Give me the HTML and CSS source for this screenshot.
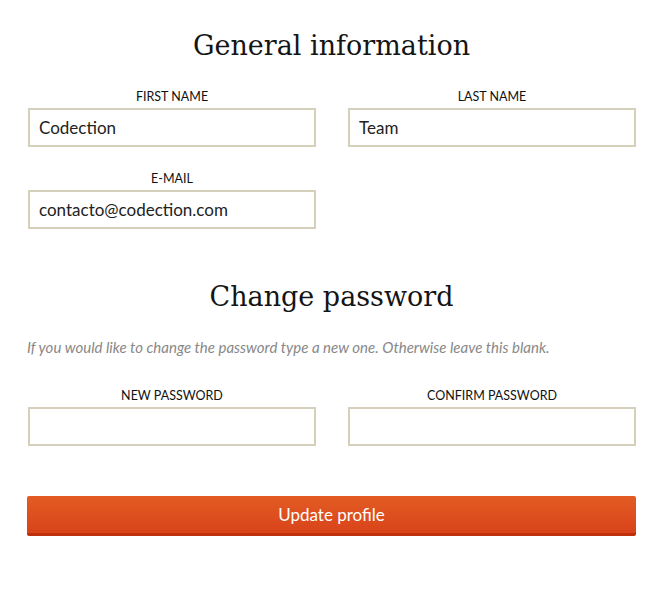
FILE: index.html
```html
<!DOCTYPE html>
<html lang="en">
<head>
<meta charset="utf-8">
<title>Profile</title>
<link rel="stylesheet" href="styles.css">
</head>
<body>
<form class="profile">
  <h2 class="section-title">General information</h2>
  <div class="grid">
    <div class="field">
      <label class="field-label">First name</label>
      <input class="field-input" type="text" value="Codection">
    </div>
    <div class="field">
      <label class="field-label">Last name</label>
      <input class="field-input" type="text" value="Team">
    </div>
    <div class="field">
      <label class="field-label">E-mail</label>
      <input class="field-input" type="text" value="contacto@codection.com">
    </div>
  </div>

  <h2 class="section-title second">Change password</h2>
  <p class="hint">If you would like to change the password type a new one. Otherwise leave this blank.</p>
  <div class="grid passwords">
    <div class="field">
      <label class="field-label">New password</label>
      <input class="field-input" type="password">
    </div>
    <div class="field">
      <label class="field-label">Confirm password</label>
      <input class="field-input" type="password">
    </div>
  </div>

  <button class="submit" type="button">Update profile</button>
</form>
</body>
</html>
```
FILE: styles.css
```css
* { box-sizing: border-box; }
body {
  margin: 0;
  background: #fff;
  font-family: "Source Sans Pro", Lato, "Noto Sans", sans-serif;
  color: #222;
}
.profile {
  padding: 0 27px;
}
.section-title {
  margin: 0;
  padding-top: 28px;
  font-family: "DejaVu Serif", "Liberation Serif", serif;
  font-weight: normal;
  font-size: 27px;
  line-height: 36px;
  text-align: center;
  color: #151515;
}
.section-title.second {
  padding-top: 50px;
}
.grid {
  display: grid;
  grid-template-columns: 1fr 1fr;
  column-gap: 32px;
  row-gap: 23px;
  margin-top: 24px;
  padding-left: 1px;
}
.grid.passwords {
  margin-top: 30px;
}
.field {
  display: flex;
  flex-direction: column;
}
.field-label {
  display: block;
  text-align: center;
  text-transform: uppercase;
  font-size: 12.5px;
  line-height: 18px;
  margin-bottom: 2px;
  color: #111;
}
.field-input {
  height: 39px;
  border: 2px solid #d4d0bb;
  padding: 0 9px;
  font-family: inherit;
  font-size: 17px;
  color: #222;
  background: #fff;
  outline: none;
}
.hint {
  margin: 22px 0 0;
  font-style: italic;
  font-size: 15px;
  line-height: 20px;
  color: #888;
}
.submit {
  display: block;
  width: 100%;
  margin-top: 50px;
  height: 40px;
  border: none;
  border-bottom: 3px solid #bd300b;
  border-radius: 2px;
  background: linear-gradient(#e35c23, #d8431a);
  color: #fff;
  font-family: inherit;
  font-size: 17px;
  cursor: pointer;
}
```
